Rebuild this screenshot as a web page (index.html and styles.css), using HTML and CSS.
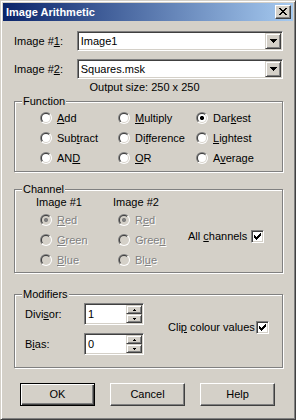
FILE: index.html
```html
<!DOCTYPE html>
<html>
<head>
<meta charset="utf-8">
<link rel="stylesheet" href="styles.css">
</head>
<body>
<div class="window">
  <div class="titlebar">
    <span class="title">Image Arithmetic</span>
    <span class="close"><svg width="8" height="7" viewBox="0 0 8 7" shape-rendering="crispEdges"><path d="M0 0h2v1H0zM6 0h2v1H6zM1 1h2v1H1zM5 1h2v1H5zM2 2h4v1H2zM3 3h2v1H3zM2 4h4v1H2zM1 5h2v1H1zM5 5h2v1H5zM0 6h2v1H0zM6 6h2v1H6z" fill="#000"/></svg></span>
  </div>
  <div class="body">
    <div class="combo-row">
      <span class="lbl">Image #<u>1</u>:</span>
      <div class="combo"><span class="ctext">Image1</span><span class="drop"><svg width="7" height="4" viewBox="0 0 7 4" shape-rendering="crispEdges"><path d="M0 0h7v1H0zM1 1h5v1H1zM2 2h3v1H2zM3 3h1v1H3z" fill="#000"/></svg></span></div>
    </div>
    <div class="combo-row second">
      <span class="lbl">Image #<u>2</u>:</span>
      <div class="combo"><span class="ctext">Squares.msk</span><span class="drop"><svg width="7" height="4" viewBox="0 0 7 4" shape-rendering="crispEdges"><path d="M0 0h7v1H0zM1 1h5v1H1zM2 2h3v1H2zM3 3h1v1H3z" fill="#000"/></svg></span></div>
    </div>
    <div class="output">Output size: 250 x 250</div>

    <fieldset class="group function">
      <legend>Function</legend>
      <div class="fn-grid">
        <div class="opt"><span class="radio"></span><span><u>A</u>dd</span></div>
        <div class="opt"><span class="radio"></span><span><u>M</u>ultiply</span></div>
        <div class="opt"><span class="radio on"></span><span>Dar<u>k</u>est</span></div>
        <div class="opt"><span class="radio"></span><span>Sub<u>t</u>ract</span></div>
        <div class="opt"><span class="radio"></span><span>Di<u>f</u>ference</span></div>
        <div class="opt"><span class="radio"></span><span><u>L</u>ightest</span></div>
        <div class="opt"><span class="radio"></span><span>AN<u>D</u></span></div>
        <div class="opt"><span class="radio"></span><span><u>O</u>R</span></div>
        <div class="opt"><span class="radio"></span><span>A<u>v</u>erage</span></div>
      </div>
    </fieldset>

    <fieldset class="group channel">
      <legend>Channel</legend>
      <div class="chan">
        <div class="col col1">
          <div class="hdr">Image #1</div>
          <div class="opt dis"><span class="radio on"></span><span><u>R</u>ed</span></div>
          <div class="opt dis"><span class="radio"></span><span><u>G</u>reen</span></div>
          <div class="opt dis"><span class="radio"></span><span><u>B</u>lue</span></div>
        </div>
        <div class="col col2">
          <div class="hdr">Image #2</div>
          <div class="opt dis"><span class="radio on"></span><span>R<u>e</u>d</span></div>
          <div class="opt dis"><span class="radio"></span><span>Gree<u>n</u></span></div>
          <div class="opt dis"><span class="radio"></span><span>Bl<u>u</u>e</span></div>
        </div>
        <div class="allch">
          <span>All <u>c</u>hannels</span>
          <span class="check"><svg width="7" height="7" viewBox="0 0 7 7" shape-rendering="crispEdges"><path d="M6 0h1v1H6zM5 1h2v1H5zM0 2h1v1H0zM4 2h3v1H4zM0 3h2v1H0zM3 3h3v1H3zM0 4h5v1H0zM1 5h3v1H1zM2 6h1v1H2z" fill="#000"/></svg></span>
        </div>
      </div>
    </fieldset>

    <fieldset class="group modifiers">
      <legend>Modifiers</legend>
      <div class="mods">
        <div class="spins">
          <div class="spinrow">
            <span class="slbl">Divi<u>s</u>or:</span>
            <div class="spin">
              <span class="val">1</span>
              <span class="sbtns">
                <span class="sbtn"><svg width="3" height="2" viewBox="0 0 3 2" shape-rendering="crispEdges"><path d="M1 0h1v1H1zM0 1h3v1H0z" fill="#000"/></svg></span>
                <span class="sbtn"><svg width="3" height="2" viewBox="0 0 3 2" shape-rendering="crispEdges"><path d="M0 0h3v1H0zM1 1h1v1H1z" fill="#000"/></svg></span>
              </span>
            </div>
          </div>
          <div class="spinrow">
            <span class="slbl">B<u>i</u>as:</span>
            <div class="spin">
              <span class="val">0</span>
              <span class="sbtns">
                <span class="sbtn"><svg width="3" height="2" viewBox="0 0 3 2" shape-rendering="crispEdges"><path d="M1 0h1v1H1zM0 1h3v1H0z" fill="#000"/></svg></span>
                <span class="sbtn"><svg width="3" height="2" viewBox="0 0 3 2" shape-rendering="crispEdges"><path d="M0 0h3v1H0zM1 1h1v1H1z" fill="#000"/></svg></span>
              </span>
            </div>
          </div>
        </div>
        <div class="clip">
          <span>Cli<u>p</u> colour values</span>
          <span class="check"><svg width="7" height="7" viewBox="0 0 7 7" shape-rendering="crispEdges"><path d="M6 0h1v1H6zM5 1h2v1H5zM0 2h1v1H0zM4 2h3v1H4zM0 3h2v1H0zM3 3h3v1H3zM0 4h5v1H0zM1 5h3v1H1zM2 6h1v1H2z" fill="#000"/></svg></span>
        </div>
      </div>
    </fieldset>

    <div class="buttons">
      <div class="btn default">OK</div>
      <div class="btn">Cancel</div>
      <div class="btn">Help</div>
    </div>
  </div>
</div>
</body>
</html>
```

FILE: styles.css
```css
* { box-sizing: border-box; }
html, body { margin: 0; padding: 0; }
body {
  font-family: "Liberation Sans", Arial, sans-serif;
  font-size: 11px;
  line-height: 13px;
  color: #000;
  background: #d4d0c8;
}
u { text-decoration: underline; text-underline-offset: 1px; }

.window {
  width: 296px;
  height: 420px;
  background: #d4d0c8;
  border: 1px solid;
  border-color: #d4d0c8 #404040 #404040 #d4d0c8;
  box-shadow: inset 1px 1px #fff, inset -1px -1px #808080;
  padding: 2px;
  display: flex;
  flex-direction: column;
}

.titlebar {
  height: 18px;
  background: linear-gradient(to right, #0a246a, #a6caf0);
  display: flex;
  align-items: center;
  justify-content: space-between;
  padding: 0 2px 0 3px;
}
.title { color: #fff; font-weight: bold; }
.close {
  width: 16px;
  height: 14px;
  background: #d4d0c8;
  border: 1px solid;
  border-color: #fff #404040 #404040 #fff;
  box-shadow: inset -1px -1px #808080;
  display: flex;
  align-items: center;
  justify-content: center;
}
.close svg { display: block; margin: 0 1px 1px 0; }

.body {
  display: flex;
  flex-direction: column;
  padding: 0 10px 0 11px;
}

.combo-row {
  display: flex;
  align-items: center;
  margin-top: 10px;
  height: 20px;
}
.combo-row.second { margin-top: 8px; }
.lbl { width: 63px; }
.combo {
  width: 207px;
  height: 20px;
  background: #fff;
  border: 1px solid;
  border-color: #808080 #fff #fff #808080;
  box-shadow: inset 1px 1px #404040, inset -1px -1px #d4d0c8;
  padding: 1px;
  display: flex;
  align-items: stretch;
}
.ctext { flex: 1; padding-left: 2px; display: flex; align-items: center; }
.drop {
  width: 16px;
  background: #d4d0c8;
  border: 1px solid;
  border-color: #d4d0c8 #404040 #404040 #d4d0c8;
  box-shadow: inset 1px 1px #fff, inset -1px -1px #808080;
  display: flex;
  align-items: center;
  justify-content: center;
}
.drop svg { display: block; }

.output {
  margin-top: 2px;
  margin-left: 66px;
  width: 129px;
  text-align: center;
  white-space: nowrap;
}

.group {
  margin: 0;
  padding: 0;
  width: 269px;
  min-inline-size: 0;
  border: 1px solid #808080;
  box-shadow: 1px 1px 0 #fff, inset 1px 1px 0 #fff;
}
.group legend {
  margin-left: 7px;
  padding: 0 1px;
  background: #d4d0c8;
  line-height: 13px;
}
.function { margin-top: 1px; }
.channel { margin-top: 11px; }
.modifiers { margin-top: 15px; }

.fn-grid {
  display: grid;
  grid-template-columns: 78px 78px 78px;
  grid-auto-rows: 20px;
  padding: 0 0 3px 25px;
}
.opt {
  display: flex;
  align-items: center;
  gap: 5px;
  height: 20px;
  white-space: nowrap;
}

.radio {
  width: 12px;
  height: 12px;
  border-radius: 50%;
  background: linear-gradient(135deg, #808080 50%, #fff 50%);
  position: relative;
  flex: none;
}
.radio::before {
  content: "";
  position: absolute;
  inset: 1px;
  border-radius: 50%;
  background: linear-gradient(135deg, #404040 50%, #d4d0c8 50%);
}
.radio::after {
  content: "";
  position: absolute;
  inset: 2px;
  border-radius: 50%;
  background: #fff;
}
.radio.on::after {
  background: radial-gradient(circle at center, #000 0 2px, #fff 2.2px);
}
.dis { color: #808080; text-shadow: 1px 1px 0 #fff; }
.dis .radio::after { background: #d4d0c8; }
.dis .radio.on::after {
  background: radial-gradient(circle at center, #808080 0 2px, #d4d0c8 2.2px);
}

.chan {
  display: flex;
  padding: 0 0 2px 21px;
}
.col { display: flex; flex-direction: column; }
.col1 { width: 77px; }
.col2 { width: 75px; }
.hdr { height: 13px; margin-bottom: 1px; }
.col .opt { padding-left: 4px; }
.col2 .opt { padding-left: 5px; }
.allch {
  display: flex;
  align-items: center;
  gap: 4px;
  align-self: flex-start;
  margin-top: 34px;
}

.check {
  width: 13px;
  height: 13px;
  background: #fff;
  border: 1px solid;
  border-color: #808080 #fff #fff #808080;
  box-shadow: inset 1px 1px #404040, inset -1px -1px #d4d0c8;
  display: flex;
  align-items: center;
  justify-content: center;
  flex: none;
}
.check svg { display: block; }

.mods {
  display: flex;
  align-items: center;
  padding: 2px 0 12px 10px;
}
.spins { display: flex; flex-direction: column; gap: 8px; }
.spinrow { display: flex; align-items: center; }
.slbl { width: 59px; }
.spin {
  width: 60px;
  height: 22px;
  background: #fff;
  border: 1px solid;
  border-color: #808080 #fff #fff #808080;
  box-shadow: inset 1px 1px #404040, inset -1px -1px #d4d0c8;
  padding: 1px;
  display: flex;
}
.val { flex: 1; padding-left: 2px; display: flex; align-items: center; }
.sbtns { width: 16px; display: flex; flex-direction: column; }
.sbtn {
  flex: 1;
  background: #d4d0c8;
  border: 1px solid;
  border-color: #d4d0c8 #404040 #404040 #d4d0c8;
  box-shadow: inset 1px 1px #fff, inset -1px -1px #808080;
  display: flex;
  align-items: center;
  justify-content: center;
}
.sbtn svg { display: block; }

.clip {
  display: flex;
  align-items: center;
  gap: 1px;
  margin-left: 24px;
  margin-top: -4px;
}

.buttons {
  display: flex;
  gap: 15px;
  margin-top: 15px;
  padding-left: 6px;
}
.btn {
  width: 75px;
  height: 23px;
  border: 1px solid;
  border-color: #fff #404040 #404040 #fff;
  box-shadow: inset -1px -1px #808080;
  display: flex;
  align-items: center;
  justify-content: center;
}
.btn.default {
  border-color: #000;
  box-shadow: inset 1px 1px #fff, inset -1px -1px #404040, inset -2px -2px #808080;
}
```
